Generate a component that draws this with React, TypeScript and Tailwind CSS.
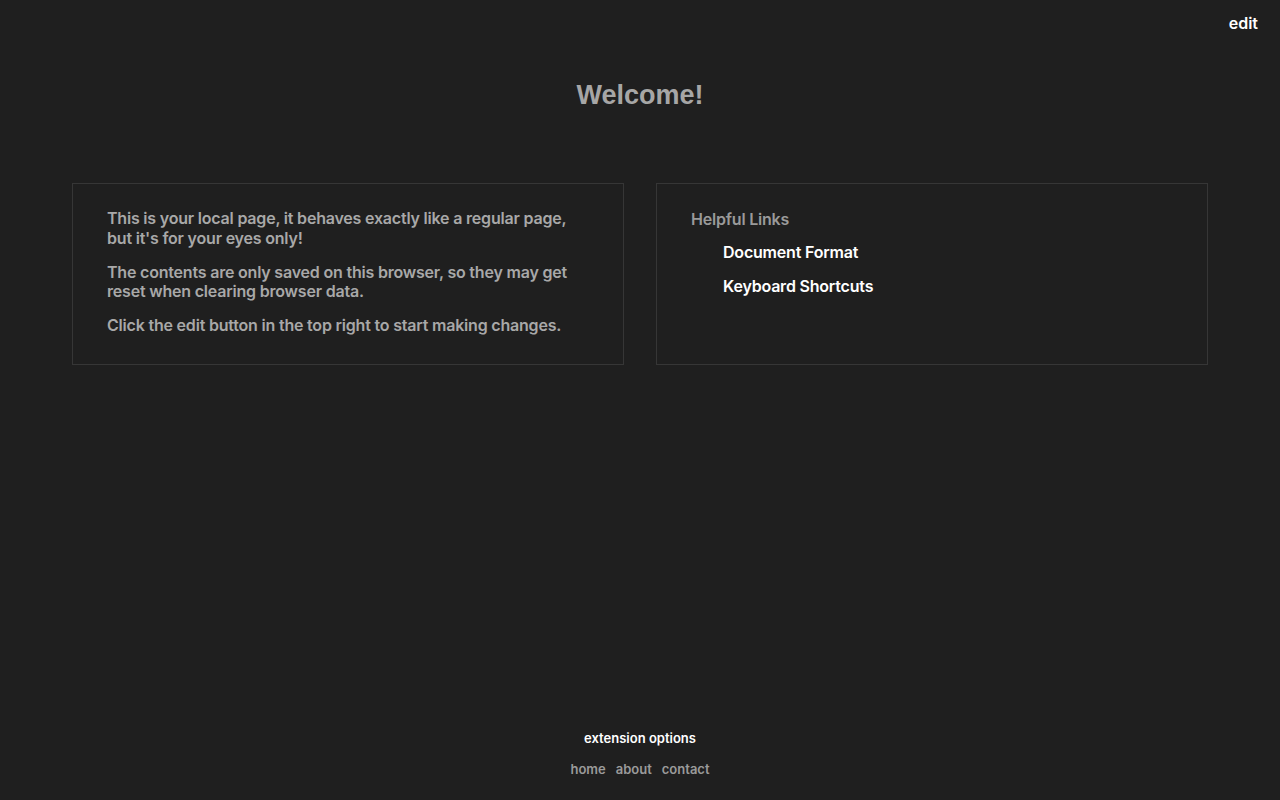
export default function App() {
  return (
    <div className="min-h-screen bg-[#1f1f1f] flex flex-col font-['Inter','Noto_Sans',sans-serif]">
      {/* top bar */}
      <div className="flex justify-end px-[22px] pt-[7px] h-[39px]">
        <button className="text-white text-[16px] font-semibold leading-[22px]">edit</button>
      </div>

      <h1 className="text-center text-[#a6a6a6] text-[27px] font-bold leading-[32px] mt-[40px] font-['Liberation_Sans',Arial,sans-serif]">
        Welcome!
      </h1>

      {/* cards */}
      <div className="grid grid-cols-2 gap-[32px] px-[72px] mt-[72px]">
        <div className="border border-[#363636] h-[182px] px-[34px] pt-[25px] text-[#a8a8a8] text-[16px] font-semibold leading-[19.5px] tracking-[-0.2px]">
          <p>This is your local page, it behaves exactly like a regular page, but it's for your eyes only!</p>
          <p className="mt-[14.5px]">The contents are only saved on this browser, so they may get reset when clearing browser data.</p>
          <p className="mt-[14.5px]">Click the edit button in the top right to start making changes.</p>
        </div>
        <div className="border border-[#363636] h-[182px] px-[34px] pt-[25px] text-[16px] font-semibold leading-[20px] tracking-[-0.2px]">
          <div className="text-[#9a9a9a]">Helpful Links</div>
          <ul className="pl-[32px] mt-[13px] flex flex-col gap-[14px] text-white">
            <li><a href="#">Document Format</a></li>
            <li><a href="#">Keyboard Shortcuts</a></li>
          </ul>
        </div>
      </div>

      <div className="flex-1" />

      {/* footer */}
      <footer className="flex flex-col items-center pb-[22px] text-[13px] font-semibold leading-[18px]">
        <a href="#" className="text-white">extension options</a>
        <div className="flex gap-[10px] mt-[13px] text-[#9a9a9a]">
          <a href="#">home</a>
          <a href="#">about</a>
          <a href="#">contact</a>
        </div>
      </footer>
    </div>
  );
}
